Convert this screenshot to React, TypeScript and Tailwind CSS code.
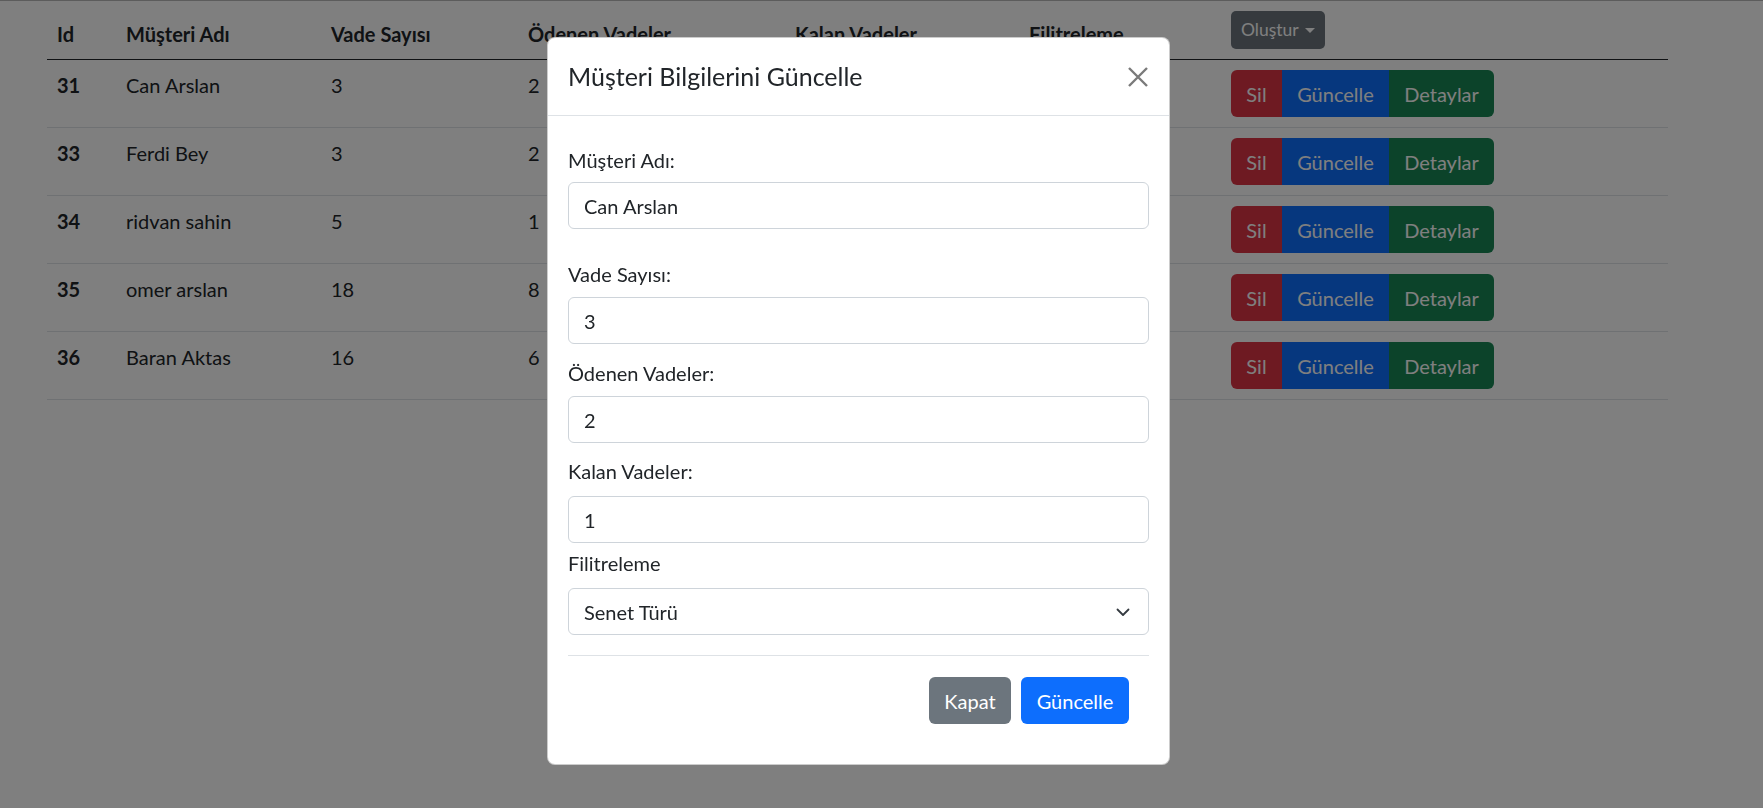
import React from "react";

const rows = [
  { id: 31, name: "Can Arslan", vade: 3, odenen: 2, kalan: 1 },
  { id: 33, name: "Ferdi Bey", vade: 3, odenen: 2, kalan: 1 },
  { id: 34, name: "ridvan sahin", vade: 5, odenen: 1, kalan: 4 },
  { id: 35, name: "omer arslan", vade: 18, odenen: 8, kalan: 10 },
  { id: 36, name: "Baran Aktas", vade: 16, odenen: 6, kalan: 10 },
];

const font = { fontFamily: "Lato, 'Open Sans', 'Noto Sans', sans-serif" };

function Field({ label, value, labelMt, inputMt }: { label: string; value: string; labelMt: string; inputMt: string }) {
  return (
    <>
      <label className={`block h-[30px] text-[20px] leading-[30px] ${labelMt}`}>{label}</label>
      <div className={`${inputMt} flex h-[47px] items-center rounded-[6px] border border-[#ced4da] px-[15px] text-[20px] text-[#212529]`}>
        {value}
      </div>
    </>
  );
}

export default function App() {
  return (
    <div className="relative min-h-screen overflow-hidden border-t border-[#b8b8b8] bg-white text-[#212529]" style={font}>
      <div className="pl-[47px]">
        <table className="w-[1621px] table-fixed border-collapse text-[20px] leading-[30px]">
          <colgroup>
            <col className="w-[69px]" />
            <col className="w-[205px]" />
            <col className="w-[197px]" />
            <col className="w-[267px]" />
            <col className="w-[234px]" />
            <col className="w-[202px]" />
            <col className="w-[447px]" />
          </colgroup>
          <thead>
            <tr className="border-b border-[#212529] text-left">
              <th className="px-[10px] py-[10px] align-bottom font-bold">Id</th>
              <th className="px-[10px] py-[10px] align-bottom font-bold">Müşteri Adı</th>
              <th className="px-[10px] py-[10px] align-bottom font-bold">Vade Sayısı</th>
              <th className="px-[10px] py-[10px] align-bottom font-bold">Ödenen Vadeler</th>
              <th className="px-[10px] py-[10px] align-bottom font-bold">Kalan Vadeler</th>
              <th className="px-[10px] py-[10px] align-bottom font-bold">Filitreleme</th>
              <th className="px-[10px] py-[10px] align-bottom font-normal">
                <button className="flex h-[38px] items-center rounded-[5px] bg-[#6c757d] px-[10px] text-[17.5px] text-white">
                  Oluştur
                  <span className="ml-[6px] h-0 w-0 border-x-[5px] border-t-[5px] border-x-transparent border-t-white" />
                </button>
              </th>
            </tr>
          </thead>
          <tbody>
            {rows.map((r) => (
              <tr key={r.id} className="border-b border-[#dee2e6]">
                <td className="px-[10px] py-[10px] align-top font-bold">{r.id}</td>
                <td className="px-[10px] py-[10px] align-top">{r.name}</td>
                <td className="px-[10px] py-[10px] align-top">{r.vade}</td>
                <td className="px-[10px] py-[10px] align-top">{r.odenen}</td>
                <td className="px-[10px] py-[10px] align-top">{r.kalan}</td>
                <td className="px-[10px] py-[10px] align-top">Senet Türü</td>
                <td className="px-[10px] py-[10px] align-top">
                  <div className="flex h-[47px] text-[20px] text-white">
                    <button className="flex w-[51px] items-center justify-center rounded-l-[6px] bg-[#dc3545]">Sil</button>
                    <button className="flex w-[107px] items-center justify-center bg-[#0d6efd]">Güncelle</button>
                    <button className="flex w-[105px] items-center justify-center rounded-r-[6px] bg-[#198754]">Detaylar</button>
                  </div>
                </td>
              </tr>
            ))}
          </tbody>
        </table>
      </div>

      <div className="fixed inset-0 bg-black/50" />

      <div className="fixed inset-0">
        <div className="ml-[547px] mt-[37px] w-[623px] rounded-[8px] border border-black/20 bg-white text-[#212529]">
          <div className="flex h-[78px] items-center justify-between border-b border-[#dee2e6] px-[20px]">
            <h5 className="text-[25px] leading-[37px]">Müşteri Bilgilerini Güncelle</h5>
            <button className="mr-[-1px] flex h-[24px] w-[24px] items-center justify-center">
              <svg width="22" height="22" viewBox="0 0 22 22">
                <path d="M2 2 L20 20 M20 2 L2 20" stroke="#7a7a7a" strokeWidth="2.4" strokeLinecap="butt" />
              </svg>
            </button>
          </div>
          <div className="px-[20px] pb-[40px] pt-[29px]">
            <Field label="Müşteri Adı:" value="Can Arslan" labelMt="mt-0" inputMt="mt-[7px]" />
            <Field label="Vade Sayısı:" value="3" labelMt="mt-[30px]" inputMt="mt-[8px]" />
            <Field label="Ödenen Vadeler:" value="2" labelMt="mt-[14px]" inputMt="mt-[8px]" />
            <Field label="Kalan Vadeler:" value="1" labelMt="mt-[13px]" inputMt="mt-[10px]" />
            <label className="mt-[5px] block h-[30px] text-[20px] leading-[30px]">Filitreleme</label>
            <div className="mt-[10px] flex h-[47px] items-center justify-between rounded-[6px] border border-[#ced4da] pl-[15px] pr-[17px] text-[20px]">
              <span>Senet Türü</span>
              <svg width="16" height="16" viewBox="0 0 16 16">
                <path d="M2.5 5.5l5.5 5.5 5.5-5.5" fill="none" stroke="#343a40" strokeWidth="1.8" strokeLinecap="round" strokeLinejoin="round" />
              </svg>
            </div>
            <div className="mt-[20px] h-px bg-[#dee2e6]" />
            <div className="mr-[20px] mt-[21px] flex justify-end gap-[10px]">
              <button className="flex h-[47px] w-[82px] items-center justify-center rounded-[6px] bg-[#6c757d] text-[20px] text-white">Kapat</button>
              <button className="flex h-[47px] w-[108px] items-center justify-center rounded-[6px] bg-[#0d6efd] text-[20px] text-white">Güncelle</button>
            </div>
          </div>
        </div>
      </div>
    </div>
  );
}
